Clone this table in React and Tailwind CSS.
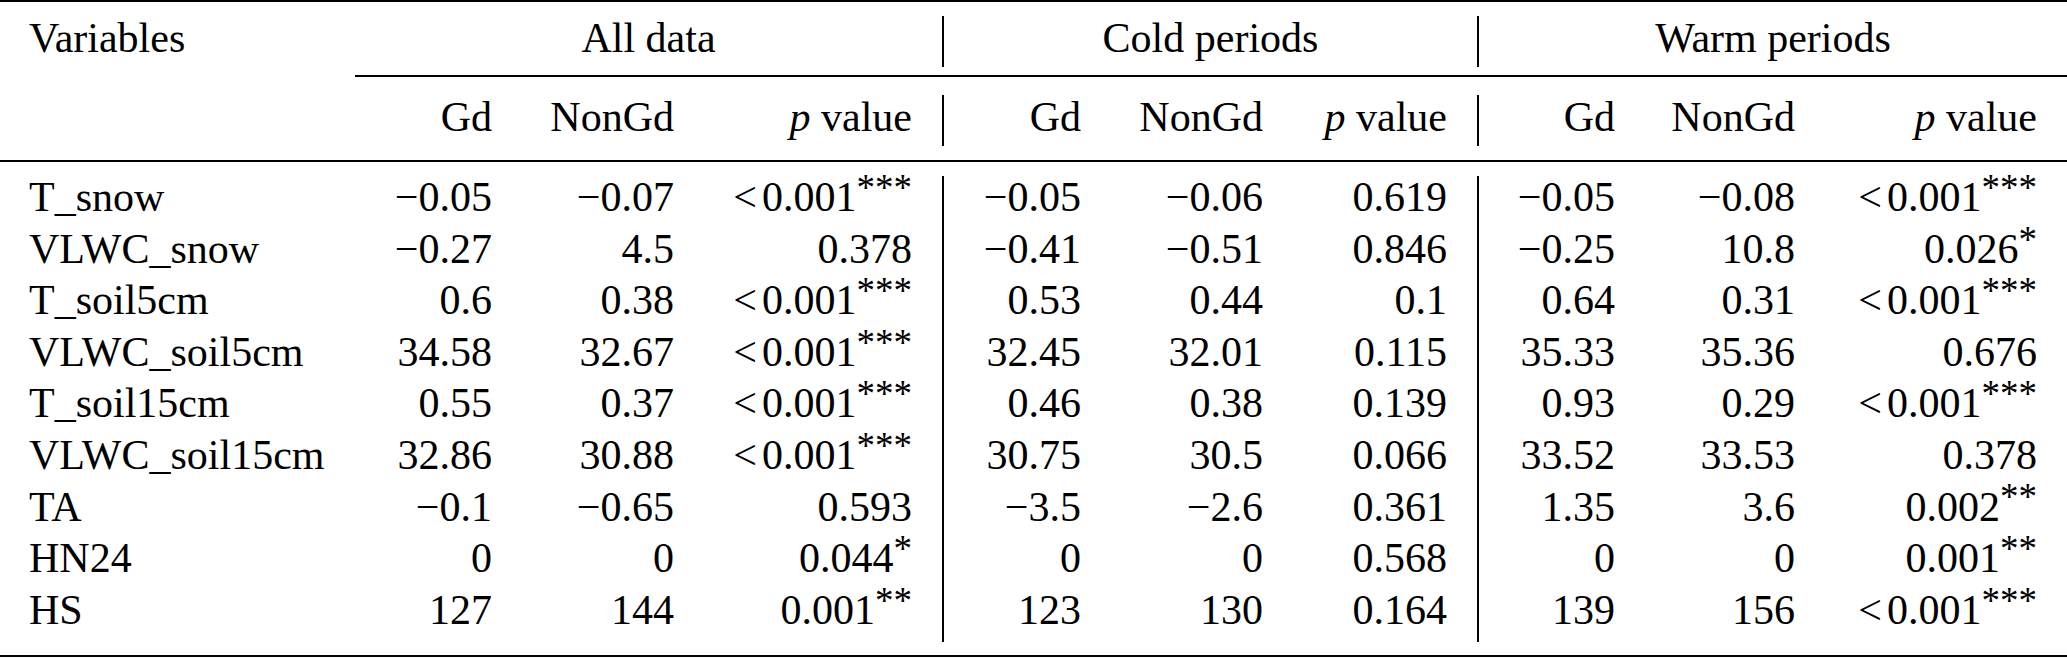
import React from 'react';

const rows = [
  ['T_snow', '−0.05', '−0.07', '<0.001***', '−0.05', '−0.06', '0.619', '−0.05', '−0.08', '<0.001***'],
  ['VLWC_snow', '−0.27', '4.5', '0.378', '−0.41', '−0.51', '0.846', '−0.25', '10.8', '0.026*'],
  ['T_soil5cm', '0.6', '0.38', '<0.001***', '0.53', '0.44', '0.1', '0.64', '0.31', '<0.001***'],
  ['VLWC_soil5cm', '34.58', '32.67', '<0.001***', '32.45', '32.01', '0.115', '35.33', '35.36', '0.676'],
  ['T_soil15cm', '0.55', '0.37', '<0.001***', '0.46', '0.38', '0.139', '0.93', '0.29', '<0.001***'],
  ['VLWC_soil15cm', '32.86', '30.88', '<0.001***', '30.75', '30.5', '0.066', '33.52', '33.53', '0.378'],
  ['TA', '−0.1', '−0.65', '0.593', '−3.5', '−2.6', '0.361', '1.35', '3.6', '0.002**'],
  ['HN24', '0', '0', '0.044*', '0', '0', '0.568', '0', '0', '0.001**'],
  ['HS', '127', '144', '0.001**', '123', '130', '0.164', '139', '156', '<0.001***'],
];

// column widths per group (px), text right-aligned with 30px right pad
const groups = [
  { title: 'All data', width: 'w-[587px]', cols: ['w-[167px]', 'w-[182px]', 'w-[238px]'], start: 1 },
  { title: 'Cold periods', width: 'w-[533px]', cols: ['w-[167px]', 'w-[182px]', 'w-[184px]'], start: 4 },
  { title: 'Warm periods', width: 'w-[588px]', cols: ['w-[166px]', 'w-[180px]', 'w-[242px]'], start: 7 },
];

const PValue = ({ v }) => {
  const less = v.startsWith('<');
  const body = v.replace('<', '').replace(/\*+$/, '');
  const stars = (v.match(/\*+$/) || [''])[0];
  return (
    <>
      {less && <span className="mr-[5px]">&lt;</span>}
      {body}
      {stars && <sup className="text-[37px] top-[-0.3em]">{stars}</sup>}
    </>
  );
};

const Bar = ({ cls }) => <div className={`w-[2px] bg-black self-stretch ${cls}`} />;

const Cell = ({ w, children }) => (
  <div className={`${w} pr-[30px] text-right whitespace-nowrap`}>{children}</div>
);

const App = () => {
  return (
    <div className="w-[2067px] h-[658px] bg-white text-black text-[42px] leading-[51.6px] font-['Liberation_Serif','Tinos','DejaVu_Serif',serif]">
      <div className="h-[2px] bg-black" />

      {/* header row 1 */}
      <div className="flex h-[73px]">
        <div className="w-[355px] pl-[29px] pt-[11px]">Variables</div>
        {groups.map((g, i) => (
          <React.Fragment key={g.title}>
            {i > 0 && <Bar cls="mt-[14px] mb-[8px]" />}
            <div className={`${g.width} pt-[11px] text-center`}>{g.title}</div>
          </React.Fragment>
        ))}
      </div>

      {/* cmidrule */}
      <div className="flex h-[2px]">
        <div className="w-[355px]" />
        <div className="flex-1 bg-black" />
      </div>

      {/* header row 2 */}
      <div className="flex h-[83px]">
        <div className="w-[355px]" />
        {groups.map((g, i) => (
          <React.Fragment key={g.title}>
            {i > 0 && <Bar cls="mt-[18px] mb-[14px]" />}
            <div className={`${g.width} pt-[15px] flex`}>
              <Cell w={g.cols[0]}>Gd</Cell>
              <Cell w={g.cols[1]}>NonGd</Cell>
              <Cell w={g.cols[2]}>
                <i>p</i> value
              </Cell>
            </div>
          </React.Fragment>
        ))}
      </div>

      <div className="h-[2px] bg-black" />

      {/* body */}
      <div className="flex h-[493px]">
        <div className="w-[355px] pt-[10px]">
          {rows.map((r) => (
            <div key={r[0]} className="h-[51.6px] pl-[29px] whitespace-nowrap">{r[0]}</div>
          ))}
        </div>
        {groups.map((g, i) => (
          <React.Fragment key={g.title}>
            {i > 0 && <Bar cls="mt-[14px] mb-[13px]" />}
            <div className={`${g.width} pt-[10px]`}>
              {rows.map((r) => (
                <div key={r[0]} className="flex h-[51.6px]">
                  <Cell w={g.cols[0]}>{r[g.start]}</Cell>
                  <Cell w={g.cols[1]}>{r[g.start + 1]}</Cell>
                  <Cell w={g.cols[2]}>
                    <PValue v={r[g.start + 2]} />
                  </Cell>
                </div>
              ))}
            </div>
          </React.Fragment>
        ))}
      </div>

      <div className="h-[2px] bg-black" />
    </div>
  );
};

export default App;
